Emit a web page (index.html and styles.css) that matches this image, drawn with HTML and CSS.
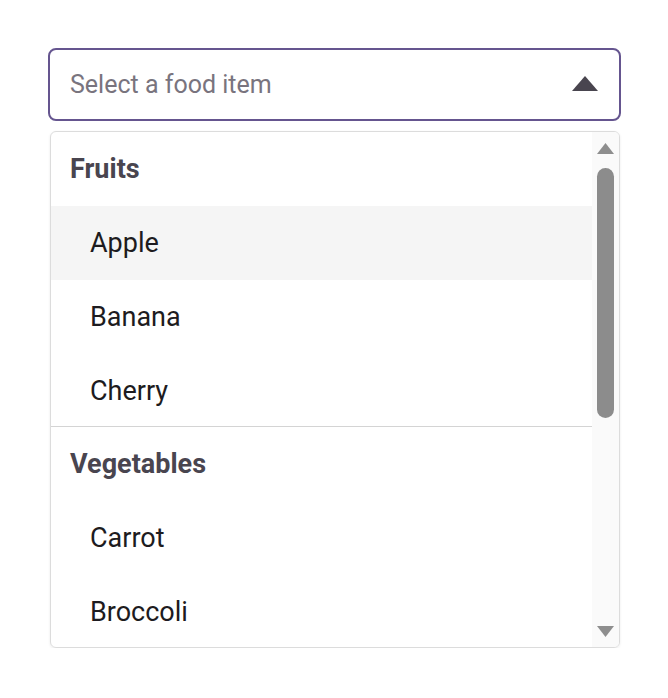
FILE: index.html
```html
<!DOCTYPE html>
<html>
<head>
    <title>Food Select</title>
    <link rel="stylesheet" href="styles.css">
</head>
<body>
    <div class="picker">
        <div class="select">
            <span class="placeholder">Select a food item</span>
            <svg class="caret" width="26" height="15" viewBox="0 0 26 15"><polygon points="13,0 26,15 0,15" fill="#49454F"/></svg>
        </div>

        <div class="dropdown">
            <div class="options">
                <div class="group">
                    <div class="group-label">Fruits</div>
                    <div class="option active">Apple</div>
                    <div class="option">Banana</div>
                    <div class="option">Cherry</div>
                </div>
                <div class="group">
                    <div class="group-label">Vegetables</div>
                    <div class="option">Carrot</div>
                    <div class="option">Broccoli</div>
                </div>
            </div>
            <div class="scrollbar">
                <svg class="arrow" width="17" height="11" viewBox="0 0 17 11"><polygon points="8.5,0 17,11 0,11" fill="#8e8e8e"/></svg>
                <div class="track">
                    <div class="thumb"></div>
                </div>
                <svg class="arrow" width="17" height="11" viewBox="0 0 17 11"><polygon points="0,0 17,0 8.5,11" fill="#8e8e8e"/></svg>
            </div>
        </div>
    </div>
</body>
</html>
```

FILE: styles.css
```css
body {
    margin: 0;
    padding: 48px 47px 0 48px;
    font-family: Roboto, "Noto Sans", sans-serif;
    background: #fff;
}
.picker {
    width: 573px;
}
.select {
    height: 69px;
    border: 2px solid #65558F;
    border-radius: 8px;
    display: flex;
    align-items: center;
    justify-content: space-between;
    padding: 0 21px 0 20px;
}
.placeholder {
    font-size: 25px;
    color: #79747E;
}
.caret {
    margin-top: -2px;
}
.dropdown {
    margin: 10px 1px 0 2px;
    height: 515px;
    border: 1px solid #dcdcdc;
    border-radius: 6px;
    box-shadow: 0 1px 3px rgba(0, 0, 0, 0.08);
    display: flex;
    overflow: hidden;
}
.options {
    flex: 1;
    overflow: hidden;
}
.group + .group {
    border-top: 1px solid #d4d4d4;
    margin-top: -2px;
}
.group-label,
.option {
    height: 74px;
    display: flex;
    align-items: center;
    font-size: 27px;
}
.group-label {
    padding-left: 19px;
    font-weight: 700;
    color: #49454F;
}
.option {
    padding-left: 39px;
    color: #1D1B20;
}
.option.active {
    background: #f5f5f5;
}
.scrollbar {
    width: 27px;
    background: #fafafa;
    display: flex;
    flex-direction: column;
    align-items: center;
    padding: 11px 0 10px;
    box-sizing: border-box;
}
.track {
    flex: 1;
    width: 17px;
    padding: 14px 0;
}
.thumb {
    height: 250px;
    background: #8c8c8c;
    border-radius: 9px;
}
```
